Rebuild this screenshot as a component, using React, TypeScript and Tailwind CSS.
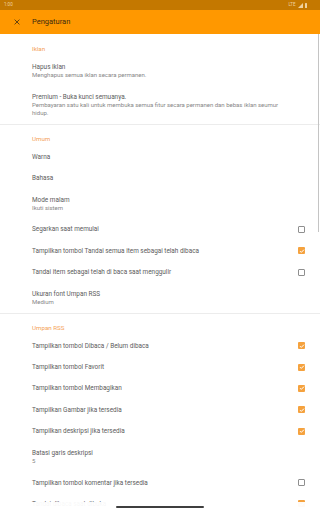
import React from "react"

type Row = {
  title: string
  summary?: string
  check?: boolean
}

const sections: { name: string; rows: Row[] }[] = [
  {
    name: "Iklan",
    rows: [
      { title: "Hapus iklan", summary: "Menghapus semua iklan secara permanen." },
      {
        title: "Premium - Buka kunci semuanya.",
        summary:
          "Pembayaran satu kali untuk membuka semua fitur secara permanen dan bebas iklan seumur hidup.",
      },
    ],
  },
  {
    name: "Umum",
    rows: [
      { title: "Warna" },
      { title: "Bahasa" },
      { title: "Mode malam", summary: "Ikuti sistem" },
      { title: "Segarkan saat memulai", check: false },
      { title: "Tampilkan tombol Tandai semua item sebagai telah dibaca", check: true },
      { title: "Tandai item sebagai telah di baca saat menggulir", check: false },
      { title: "Ukuran font Umpan RSS", summary: "Medium" },
    ],
  },
  {
    name: "Umpan RSS",
    rows: [
      { title: "Tampilkan tombol Dibaca / Belum dibaca", check: true },
      { title: "Tampilkan tombol Favorit", check: true },
      { title: "Tampilkan tombol Membagikan", check: true },
      { title: "Tampilkan Gambar jika tersedia", check: true },
      { title: "Tampilkan deskripsi jika tersedia", check: true },
      { title: "Batasi garis deskripsi", summary: "5" },
      { title: "Tampilkan tombol komentar jika tersedia", check: false },
      { title: "Tandai dibaca saat dibuka", check: true },
    ],
  },
]

function Checkbox({ on }: { on: boolean }) {
  if (on) {
    return (
      <div className="w-[7px] h-[7px] rounded-[1px] bg-[#f5a23e] flex items-center justify-center">
        <svg width="6" height="6" viewBox="0 0 24 24">
          <path d="M4 12.5l5 5L20 6.5" fill="none" stroke="#fff" strokeWidth="4" />
        </svg>
      </div>
    )
  }
  return <div className="w-[7px] h-[7px] rounded-[1px] border border-[#8f8f8f]" />
}

function Pref({ row }: { row: Row }) {
  const tall = !!row.summary
  return (
    <div
      className={`flex items-center pl-8 pr-[15px] ${tall ? "py-[7px]" : "h-[21.4px]"}`}
    >
      <div className="flex-1 min-w-0">
        <div className="text-[6.4px] leading-[8px] text-[#5c5c5c]">{row.title}</div>
        {row.summary && (
          <div className="text-[6px] leading-[8px] text-[#878787] pr-3">{row.summary}</div>
        )}
      </div>
      {row.check !== undefined && <Checkbox on={row.check} />}
    </div>
  )
}

export default function App() {
  return (
    <div
      className="relative w-[320px] h-[512px] overflow-hidden bg-white"
      style={{ fontFamily: "Roboto, 'Noto Sans', sans-serif" }}
    >
      {/* status bar */}
      <div className="h-[10px] bg-[#c47800] flex items-center justify-between px-[4px] text-[4.5px] text-[#efd2a0]">
        <span>1:00</span>
        <div className="flex items-center gap-[2px] pr-[9px]">
          <span>LTE</span>
          <svg width="5" height="5" viewBox="0 0 10 10">
            <path d="M10 0L10 10L0 10Z" fill="#efd2a0" />
          </svg>
          <div className="w-[2.5px] h-[5px] bg-[#efd2a0] rounded-[0.5px]" />
        </div>
      </div>

      {/* app bar */}
      <div className="h-[24px] bg-[#ff9800] flex items-center">
        <div className="w-8 flex justify-center pl-[1px]">
          <svg width="6" height="6" viewBox="0 0 10 10">
            <path d="M1 1L9 9M9 1L1 9" stroke="#3d2b10" strokeWidth="1.3" />
          </svg>
        </div>
        <span className="text-[7.5px] text-[#3d2b10]">Pengaturan</span>
      </div>

      {/* list */}
      <div className="relative">
        {sections.map((s, i) => (
          <div key={s.name} className={i > 0 ? "border-t border-[#ececec]" : ""}>
            <div
              className={`pl-8 ${i === 0 ? "pt-[11px]" : "pt-[10px]"} pb-[3px] text-[6.2px] leading-[8px] text-[#f4a258]`}
            >
              {s.name}
            </div>
            {s.rows.map((r) => (
              <Pref key={r.title} row={r} />
            ))}
          </div>
        ))}
        {/* scrollbar */}
        <div className="absolute right-[1px] top-0 w-[1.5px] h-[198px] bg-[#c4c4c4]" />
      </div>

      {/* gesture nav */}
      <div className="absolute left-0 right-0 bottom-0 h-[10px] bg-white/95 flex items-center justify-center">
        <div className="w-[88px] h-[2px] rounded-full bg-[#3f3f3f]" />
      </div>
    </div>
  )
}
